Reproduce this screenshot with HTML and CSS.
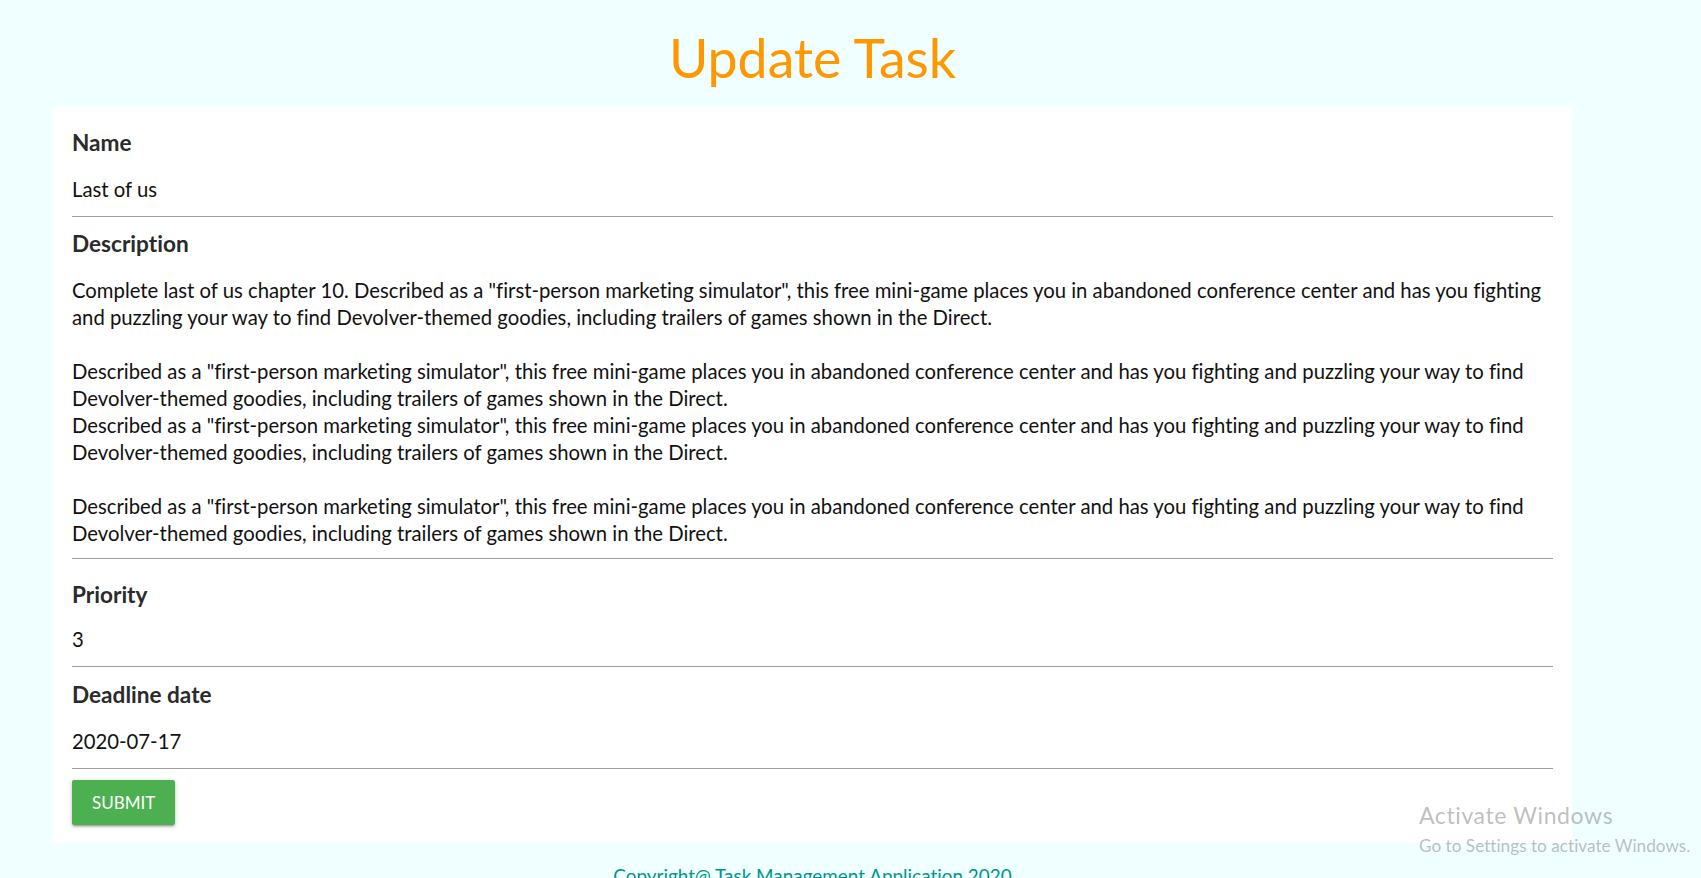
FILE: index.html
```html
<!DOCTYPE html>
<html lang="en">
<head>
<meta charset="utf-8">
<title>Update Task</title>
<link rel="stylesheet" href="styles.css">
</head>
<body>
<div class="page">
  <h1 class="page-title">Update Task</h1>
  <form class="card">
    <div class="field">
      <div class="field-label">Name</div>
      <div class="field-value">Last of us</div>
      <div class="divider"></div>
    </div>
    <div class="field">
      <div class="field-label">Description</div>
      <div class="field-value field-value--multiline">Complete last of us chapter 10. Described as a "first-person marketing simulator", this free mini-game places you in abandoned conference center and has you fighting and puzzling your way to find Devolver-themed goodies, including trailers of games shown in the Direct.

Described as a "first-person marketing simulator", this free mini-game places you in abandoned conference center and has you fighting and puzzling your way to find Devolver-themed goodies, including trailers of games shown in the Direct.
Described as a "first-person marketing simulator", this free mini-game places you in abandoned conference center and has you fighting and puzzling your way to find Devolver-themed goodies, including trailers of games shown in the Direct.

Described as a "first-person marketing simulator", this free mini-game places you in abandoned conference center and has you fighting and puzzling your way to find Devolver-themed goodies, including trailers of games shown in the Direct.</div>
      <div class="divider divider--tight"></div>
    </div>
    <div class="field field--spaced">
      <div class="field-label">Priority</div>
      <div class="field-value">3</div>
      <div class="divider"></div>
    </div>
    <div class="field">
      <div class="field-label">Deadline date</div>
      <div class="field-value">2020-07-17</div>
      <div class="divider"></div>
    </div>
    <button type="button" class="btn-submit">SUBMIT</button>
  </form>
  <footer class="footer">Copyright@ Task Management Application 2020</footer>
</div>
<div class="watermark">
  <div class="watermark-title">Activate Windows</div>
  <div class="watermark-sub">Go to Settings to activate Windows.</div>
</div>
</body>
</html>
```
FILE: styles.css
```css
html {
  overflow: hidden;
}
body {
  margin: 0;
  background: #f0ffff;
  font-family: "Lato", "Open Sans", sans-serif;
  font-variant-ligatures: no-common-ligatures;
  color: rgba(0, 0, 0, 0.87);
}
.page {
  width: 1625px;
}
.page-title {
  margin: 25px 0 18px;
  text-align: center;
  font-size: 53.6px;
  line-height: 64px;
  font-weight: 400;
  color: #ff9800;
}
.card {
  margin: 0 53px;
  background: #ffffff;
  padding: 21px 19px 18px;
}
.field-label {
  font-size: 22.6px;
  line-height: 30px;
  font-weight: 700;
  color: #2b2b2b;
  margin-bottom: 18px;
}
.field-value {
  font-size: 20.3px;
  line-height: 27px;
  color: #111;
}
.field-value--multiline {
  white-space: pre-line;
}
.divider {
  height: 1px;
  background: #9e9e9e;
  margin: 13px 0 12px;
}
.divider--tight {
  margin-top: 11px;
}
.field--spaced {
  padding-top: 9px;
}
.field--spaced .field-label {
  margin-bottom: 16px;
}
.field--spaced .divider {
  margin-bottom: 13px;
}
.btn-submit {
  display: inline-block;
  margin-top: -1px;
  height: 45px;
  padding: 0 20px;
  border: none;
  border-radius: 2px;
  background: #4caf50;
  color: #ffffff;
  font-family: "Lato", "Open Sans", sans-serif;
  font-size: 17px;
  line-height: 45px;
  box-shadow: 0 2px 2px 0 rgba(0, 0, 0, 0.14), 0 3px 1px -2px rgba(0, 0, 0, 0.12), 0 1px 5px 0 rgba(0, 0, 0, 0.2);
  cursor: pointer;
}
.footer {
  margin-top: 21px;
  text-align: center;
  font-size: 18.9px;
  line-height: 24px;
  color: #009688;
}
.watermark {
  position: absolute;
  left: 1419px;
  top: 801px;
  color: rgba(110, 110, 110, 0.45);
  font-family: "Lato", "Open Sans", sans-serif;
  font-weight: 400;
  white-space: nowrap;
}
.watermark-title {
  font-size: 23px;
  line-height: 28px;
  letter-spacing: 0.6px;
}
.watermark-sub {
  margin-top: 5px;
  font-size: 17.2px;
  line-height: 24px;
}
```
